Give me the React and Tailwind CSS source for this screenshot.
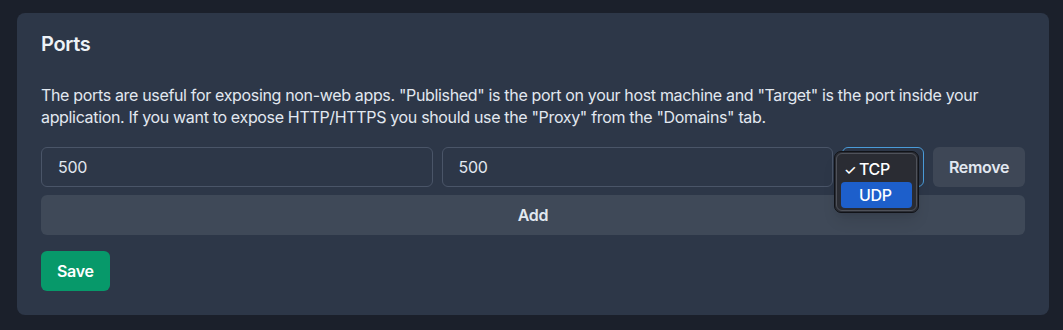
export default function App() {
  return (
    <div className="min-h-[330px] bg-[#1b202b] pt-[13px] pl-[17px] pr-[14px] pb-4 tracking-[-0.021em]" style={{ fontFamily: "Inter, 'Noto Sans', sans-serif" }}>
      <div className="rounded-lg bg-[#2d3748] px-6 pt-[17px] pb-6 text-[#e2e8f0]">
        <h2 className="text-xl leading-7 font-semibold text-[#edf2f7]">Ports</h2>
        <p className="mt-[26px] text-base leading-[22px] text-[#e2e8f0]">
          The ports are useful for exposing non-web apps. "Published" is the port on your host machine and "Target" is the port inside your application. If you want to expose HTTP/HTTPS you should use the "Proxy" from the "Domains" tab.
        </p>
        <div className="mt-[19px] flex gap-[9px]">
          <div className="flex h-10 flex-1 items-center rounded-md border border-[#4a5568] px-4 text-base text-[#e2e8f0]">500</div>
          <div className="flex h-10 flex-1 items-center rounded-md border border-[#4a5568] px-4 text-base text-[#e2e8f0]">500</div>
          <div className="relative h-10 w-[82px] rounded-md border border-[#4a9bd9]">
            <div className="absolute left-[-9px] top-[3px] z-10 w-[85px] rounded-[7px] border border-[#111318] bg-[#2a2c33] p-[1px] shadow-lg">
              <div className="rounded-[6px] border border-[#4f525a] px-[4px] py-[2px]">
                <div className="flex h-[26px] items-center text-base font-medium text-white">
                  <span className="w-[16px] pl-[3px] text-[14px]">✓</span>
                  <span className="ml-[2px]">TCP</span>
                </div>
                <div className="flex h-[26px] items-center rounded-[4px] bg-[#1d5fcb] text-base font-medium text-white">
                  <span className="w-[16px]"></span>
                  <span className="ml-[2px]">UDP</span>
                </div>
              </div>
            </div>
          </div>
          <button className="h-10 w-[92px] rounded-md bg-[#3e4756] text-base font-semibold text-[#e2e8f0]">Remove</button>
        </div>
        <button className="mt-2 h-10 w-full rounded-md bg-[#3f4958] text-base font-semibold text-[#e2e8f0]">Add</button>
        <button className="mt-4 h-10 rounded-md bg-[#07996a] px-4 text-base font-semibold text-white">Save</button>
      </div>
    </div>
  );
}
